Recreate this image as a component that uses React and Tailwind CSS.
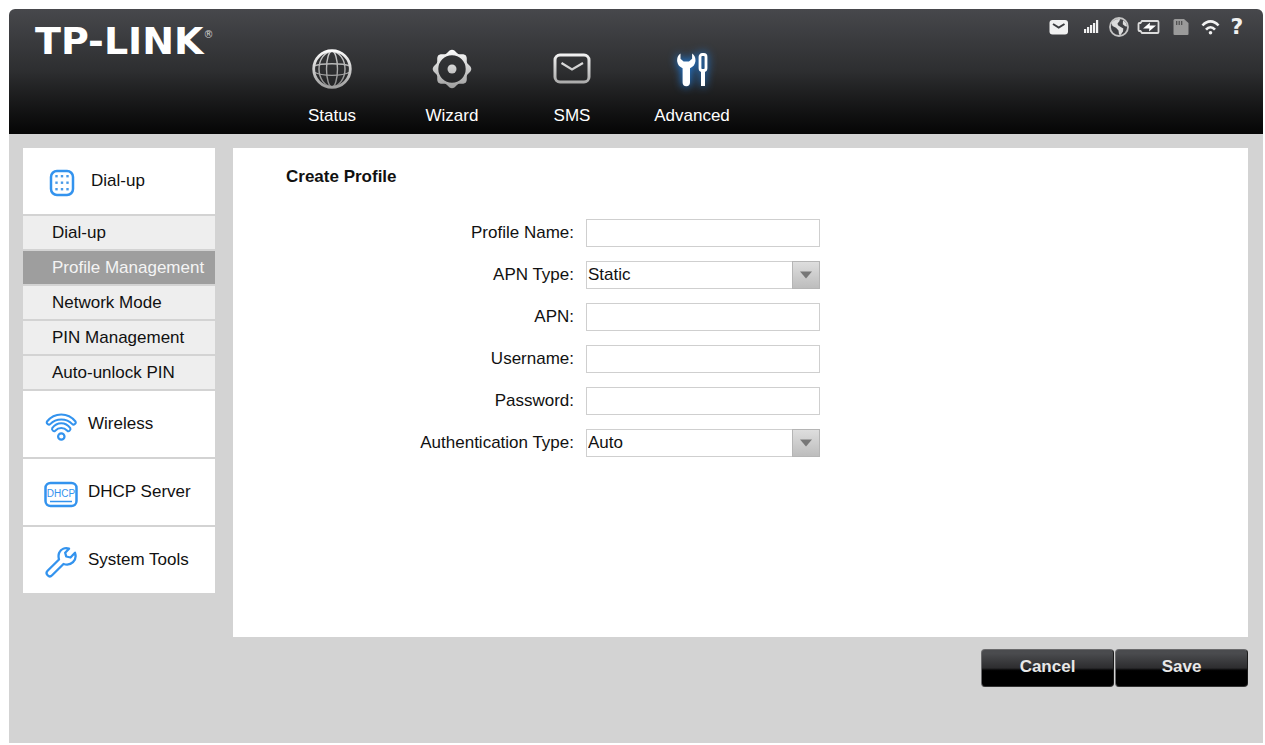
import { useState } from "react";
import clsx from "clsx";

const NAV = [
  { name: "Status", icon: <GlobeIcon /> },
  { name: "Wizard", icon: <WizardIcon /> },
  { name: "SMS", icon: <SmsIcon /> },
  { name: "Advanced", icon: <AdvancedIcon /> },
];

const DIALUP_PAGES = [
  "Dial-up",
  "Profile Management",
  "Network Mode",
  "PIN Management",
  "Auto-unlock PIN",
];

const SECTIONS = [
  { name: "Dial-up", icon: <DialIcon />, pages: DIALUP_PAGES },
  { name: "Wireless", icon: <WirelessIcon /> },
  { name: "DHCP Server", icon: <DhcpIcon /> },
  { name: "System Tools", icon: <ToolsIcon /> },
];

const FIELDS = [
  { id: "profile-name", label: "Profile Name:" },
  { id: "apn-type", label: "APN Type:", options: ["Static", "Dynamic"] },
  { id: "apn", label: "APN:" },
  { id: "username", label: "Username:" },
  { id: "password", label: "Password:", type: "password" },
  { id: "auth-type", label: "Authentication Type:", options: ["Auto", "PAP", "CHAP", "None"] },
];

function SilverGradient({ id }) {
  return (
    <defs>
      <linearGradient id={id} x1="0" y1="0" x2="0" y2="40" gradientUnits="userSpaceOnUse">
        <stop offset="0" stopColor="#ffffff" />
        <stop offset="1" stopColor="#9b9b9b" />
      </linearGradient>
    </defs>
  );
}

function GlobeIcon() {
  return (
    <svg className="h-10 w-10" viewBox="0 0 40 40" fill="none" stroke="url(#silver-globe)" aria-hidden="true">
      <SilverGradient id="silver-globe" />
      <circle cx="20" cy="20" r="18.3" strokeWidth="2.800" />
      <g strokeWidth="1.400" opacity="0.8">
        <ellipse cx="20" cy="20" rx="13" ry="17.5" />
        <ellipse cx="20" cy="20" rx="5.500" ry="18" />
        <path d="M2 17c8-3 28-3 36 0M2 23c8 4.500 28 4.500 36 0" />
      </g>
    </svg>
  );
}

function WizardIcon() {
  // Eight soft teeth as a wavy circle
  const outline = Array.from({ length: 96 }, (_, i) => {
    const a = (i * Math.PI) / 48;
    const r = 17.8 + 1.5 * Math.cos(8 * a);
    return `${(20 + r * Math.cos(a)).toFixed(2)} ${(20 + r * Math.sin(a)).toFixed(2)}`;
  }).join("L");
  return (
    <svg className="h-10 w-10" viewBox="0 0 40 40" fill="url(#silver-gear)" aria-hidden="true">
      <SilverGradient id="silver-gear" />
      <path fillRule="evenodd" d={`M${outline}ZM20 6.300a13.700 13.700 0 1 0 0 27.400a13.700 13.700 0 1 0 0-27.400z`} />
      <circle cx="20" cy="20" r="4.500" />
    </svg>
  );
}

function SmsIcon() {
  return (
    <svg className="h-10 w-10" viewBox="0 0 40 40" fill="none" stroke="url(#silver-sms)" aria-hidden="true">
      <SilverGradient id="silver-sms" />
      <rect x="3" y="6" width="34" height="27" rx="5" strokeWidth="3" />
      <path d="M9.500 14l10.500 6.500L31 14" strokeWidth="2.200" />
    </svg>
  );
}

function AdvancedIcon() {
  return (
    <svg
      className="h-10 w-10 overflow-visible drop-shadow-[0_0_5px_#1c8cff]"
      viewBox="0 0 40 40"
      aria-hidden="true"
    >
      <path
        fill="#fff"
        d="M8.500 4.500C6 6 4.800 9 5.200 12.500c.5 3.300 2.500 5.500 5.400 6.700V33.500c0 2.300 1.300 3.700 3.700 3.700s3.700-1.400 3.700-3.700V19.200c2.900-1.200 4.900-3.400 5.400-6.700.4-3.500-.8-6.500-3.300-8V9.700L17 12.500h-5.400L8.500 9.700z"
      />
      <rect x="28" y="5.500" width="6" height="16" rx="2.200" fill="none" stroke="#fff" strokeWidth="2.800" />
      <path d="M29 21h4v16h-4z" fill="#fff" />
    </svg>
  );
}

function DialIcon() {
  const dots = [7.3, 12.8, 18.3];
  return (
    <svg className="h-8 w-8" viewBox="0 0 32 32" aria-hidden="true">
      <rect x="3" y="4" width="22" height="24" rx="6" fill="none" stroke="#3393ee" strokeWidth="2.500" />
      {dots.map((x) =>
        [8, 14.5, 21].map((y) => (
          <rect key={`${x}-${y}`} x={x} y={y} width="2.400" height="2.400" fill="#4a9be8" />
        ))
      )}
    </svg>
  );
}

function WirelessIcon() {
  return (
    <svg className="h-8 w-8" viewBox="0 0 32 32" fill="none" stroke="#3393ee" strokeWidth="2" strokeLinejoin="round" aria-hidden="true">
      <path d="M2 11.500C9.500 2.200 23 2.200 30.500 11.500c1 1.500-1.600 4.200-3.200 2.600C21.500 7.800 11 7.800 5.200 14.100 3.600 15.700 1 13 2 11.500z" />
      <path d="M7.200 18.200C12 11.500 20.500 11.500 25.300 18.200c.8 1.600-1.500 4-3 2.500-3.500-3.700-8.600-3.700-12.100 0-1.500 1.500-3.800-.9-3-2.500z" />
      <circle cx="16.300" cy="26.500" r="3.200" strokeWidth="2.200" />
    </svg>
  );
}

function DhcpIcon() {
  return (
    <svg className="h-8 w-8 overflow-visible" viewBox="0 0 32 32" aria-hidden="true">
      <rect x="0.500" y="5" width="31" height="23" rx="5" fill="none" stroke="#3393ee" strokeWidth="2.500" />
      <text
        x="16"
        y="19"
        textAnchor="middle"
        fill="#3393ee"
        className="font-['Liberation_Sans',Arial,sans-serif] text-[10px]"
      >
        DHCP
      </text>
      <path d="M5 23.500h22" stroke="#3393ee" strokeWidth="1.500" />
    </svg>
  );
}

function ToolsIcon() {
  return (
    <svg className="h-8 w-8" viewBox="0 0 32 32" fill="none" stroke="#3393ee" strokeWidth="2.300" strokeLinejoin="round" aria-hidden="true">
      <path d="M24 2.700c-4-1.300-8 .3-9.800 4-1 2.300-.8 4.500-.2 6.800L2.600 24.800c-1.300 1.400-1.300 3.200 0 4.500s3.200 1.300 4.500 0L18.500 18c3.500 1.200 7 .6 9.500-1.800 2.600-2.600 3.200-6 2-9.400l-4.500 4.700-4.300-1-1-3.800z" />
    </svg>
  );
}

function StatusBar() {
  return (
    <ul className="flex items-center text-[#f1f1f1]">
      <li>
        <svg className="h-5 w-5" viewBox="0 0 20 20" role="img" aria-label="Messages">
          <rect x="0.500" y="3" width="18.500" height="14.500" rx="3" fill="currentColor" />
          <path d="M4 7l5.700 3.500L15.500 7" fill="none" stroke="#3d3e41" strokeWidth="2" />
        </svg>
      </li>
      <li className="ml-3">
        <svg className="h-5 w-5" viewBox="0 0 20 20" fill="currentColor" role="img" aria-label="Signal strength">
          <path d="M3 12h2.200v4H3zM6 10h2.200v6H6zM9 8h2.200v8H9zM12 6h2.200v10H12zM15 3h2.200v13H15z" />
        </svg>
      </li>
      <li className="ml-2">
        <svg className="h-5 w-5" viewBox="0 0 20 20" role="img" aria-label="Internet">
          <circle cx="10" cy="10" r="9" fill="none" stroke="#c4c4c4" strokeWidth="1.800" />
          <path
            fill="#dcdcdc"
            d="M2.500 6C5 2.500 8 2 11 2l-.6 2.300L8.500 6.500l.5 1.700 2.300 1.600 3 1.700-.3 3-2.500 3.500-1.500-.5-.5-4-2.500-2.700L3.500 9zM14 3.500c2.500 1.200 4 3.500 4 6l-1.800-.3-2.400-2z"
          />
        </svg>
      </li>
      <li className="ml-2">
        <svg className="h-5 w-6" viewBox="0 0 24 20" role="img" aria-label="Battery charging">
          <path d="M5 4h15.500q1 0 1 1v10q0 1-1 1H5l-1.500-2H2.500q-1 0-1-1v-6q0-1 1-1h1z" fill="none" stroke="#dcdcdc" strokeWidth="1.800" />
          <path d="M13 5.500l-.3 3h6.300l-7 6 .3-3H6z" fill="#fff" />
        </svg>
      </li>
      <li className="ml-3">
        <svg className="h-5 w-4" viewBox="0 0 16 20" role="img" aria-label="SD card">
          <path d="M2 2h9l4.500 4v11q0 1-1 1H1.500q-1 0-1-1V3.500Q.5 2 2 2z" fill="#9a9a9a" />
          <path d="M3.700 4v4M6.200 4v4M8.700 4v4" stroke="#4a4a4c" strokeWidth="1.200" />
        </svg>
      </li>
      <li className="ml-3">
        <svg className="h-5 w-5" viewBox="0 0 20 20" fill="none" stroke="currentColor" strokeWidth="2.600" role="img" aria-label="Wi-Fi">
          <path d="M1.500 8.500c4.700-5.500 11.300-5.500 16 0M5 12.700c2.800-3.300 6.200-3.300 9 0" />
          <circle cx="9.500" cy="15.700" r="1.800" fill="currentColor" stroke="none" />
        </svg>
      </li>
      <li className="ml-2">
        <a
          href="#help"
          aria-label="Help"
          className="block w-4 text-center font-['DejaVu_Sans',sans-serif] text-[22px] leading-5 font-bold"
        >
          ?
        </a>
      </li>
    </ul>
  );
}

function Header() {
  return (
    <header className="flex h-[125px] items-start rounded-t-md bg-linear-to-b from-[#47484c] via-[#2d2e30] to-[#060606] text-white">
      <a
        href="#home"
        className="flex w-[263px] shrink-0 items-start pt-3 pl-[26px] font-['DejaVu_Sans',sans-serif] text-[38px] leading-10 font-bold"
      >
        TP-LINK
        <span className="pt-2 text-[10px] leading-3 font-normal text-[#cfcfcf]">®</span>
      </a>
      <nav className="flex flex-1 pt-10">
        {NAV.map((item) => (
          <a key={item.name} href={`#${item.name}`} className="flex w-[120px] flex-col items-center gap-[17px]">
            {item.icon}
            <span className="leading-5">{item.name}</span>
          </a>
        ))}
      </nav>
      <div className="pt-2 pr-[18px]">
        <StatusBar />
      </div>
    </header>
  );
}

function Sidebar({ page, setPage }) {
  return (
    <nav className="flex w-48 shrink-0 flex-col gap-0.5">
      {SECTIONS.map((section) => (
        <div key={section.name} className="flex flex-col gap-0.5">
          <a
            href={`#${section.name}`}
            className={clsx(
              "flex h-[66px] items-center gap-[11px] bg-white",
              section.pages ? "pl-[25px]" : "pl-[22px]"
            )}
          >
            <span className="pt-1">{section.icon}</span>
            <span>{section.name}</span>
          </a>
          {section.pages?.map((name) => (
            <button
              key={name}
              type="button"
              onClick={() => setPage(name)}
              className={clsx(
                "h-[33px] cursor-pointer pl-[29px] text-left whitespace-nowrap",
                page === name ? "bg-[#9e9e9e] text-[#f4f4f4]" : "bg-[#eeeeee]"
              )}
            >
              {name}
            </button>
          ))}
        </div>
      ))}
    </nav>
  );
}

function Field({ field }) {
  return (
    <div className="flex items-center gap-3">
      <label htmlFor={field.id} className="w-[341px] text-right">
        {field.label}
      </label>
      {field.options ? (
        <div className="relative w-[234px]">
          <select
            id={field.id}
            className="block h-7 w-full appearance-none border border-[#cfcfcf] bg-white pr-8 pl-px outline-none"
          >
            {field.options.map((option) => (
              <option key={option}>{option}</option>
            ))}
          </select>
          {/* Arrow sits over the native control */}
          <span className="pointer-events-none absolute inset-y-0 right-0 flex w-7 items-center justify-center border border-[#b5b5b5] bg-linear-to-b from-[#dedede] to-[#bdbdbd]">
            <svg className="h-2 w-3" viewBox="0 0 12 8" fill="#777777" aria-hidden="true">
              <path d="M0 0.500h12L6 7.500z" />
            </svg>
          </span>
        </div>
      ) : (
        <input
          id={field.id}
          type={field.type || "text"}
          className="h-7 w-[234px] border border-[#cfcfcf] bg-white px-1 outline-none"
        />
      )}
    </div>
  );
}

function ActionButton({ children, type = "button" }) {
  return (
    <button
      type={type}
      form="profile-form"
      className="h-[38px] w-[133px] cursor-pointer rounded-sm border border-t-[#6a6a6c] border-r-[#1a1a1a] border-b-[#333333] border-l-[#6a6a6c] bg-linear-to-b from-[#4a4b4e] from-10% via-[#2d2d2f] via-50% to-black to-60% pb-0.5 font-bold text-[#e8e8e8]"
    >
      {children}
    </button>
  );
}

export default function App() {
  const [page, setPage] = useState("Profile Management");

  return (
    <div className="flex min-h-screen flex-col bg-white pt-[9px] pr-0.5 pb-0.5 pl-[9px] font-['Liberation_Sans',Arial,sans-serif] text-[17px] leading-5 text-[#111111]">
      <Header />
      <div className="flex flex-1 items-start gap-[18px] bg-[#d3d3d3] pt-3.5 pr-[15px] pb-14 pl-3.5">
        <Sidebar page={page} setPage={setPage} />
        <main className="flex min-w-0 flex-1 flex-col gap-3">
          <section className="min-h-[489px] bg-white pt-[19px]">
            <h1 className="pl-[53px] font-bold">Create Profile</h1>
            <form id="profile-form" onSubmit={(e) => e.preventDefault()} className="flex flex-col gap-3.5 pt-8">
              {FIELDS.map((field) => (
                <Field key={field.id} field={field} />
              ))}
            </form>
          </section>
          <div className="flex justify-end gap-px">
            <ActionButton>Cancel</ActionButton>
            <ActionButton type="submit">Save</ActionButton>
          </div>
        </main>
      </div>
    </div>
  );
}
